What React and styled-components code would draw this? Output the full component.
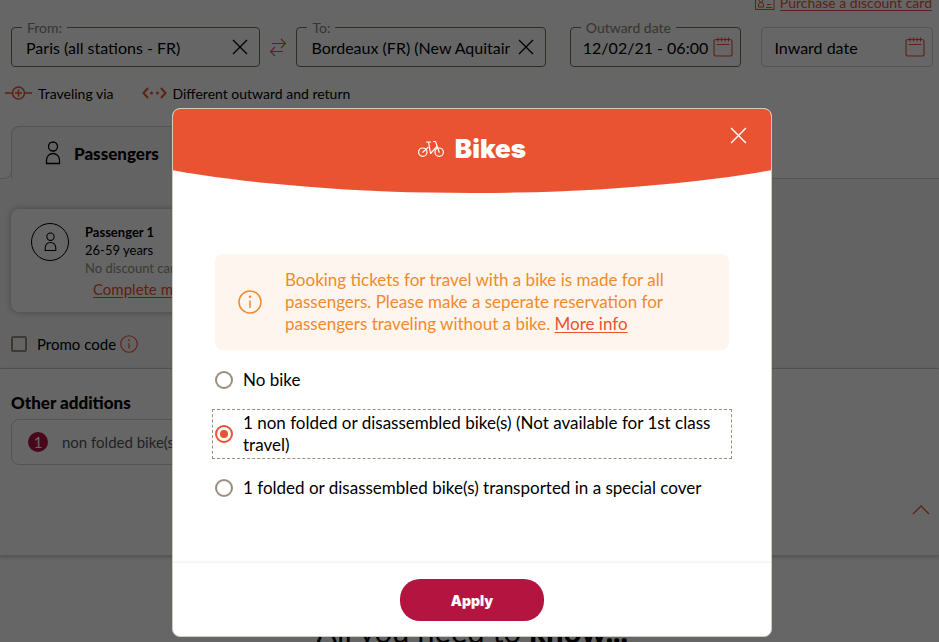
import { useState } from "react";
import styled, { createGlobalStyle } from "styled-components";

const GlobalStyle = createGlobalStyle`
  :root {
    --orange: #ea5331;
    --amber: #f18a2b;
    --crimson: #b41540;
    --taupe: #998f7f;
    --line: #d5d2cc;
  }

  * {
    box-sizing: border-box;
  }

  body {
    margin: 0;
    overflow: hidden;
    background: #fff;
    color: #000;
    font-family: Lato, "Liberation Sans", sans-serif;
    font-size: 16px;
  }

  button, input {
    font-family: inherit;
    color: inherit;
  }
`;

const Page = styled.main`
  height: 100vh;
  overflow: hidden;
`;

const Link = styled.a`
  color: var(--orange);
  font-size: ${({ $size }) => $size || "16px"};
  text-decoration: underline;
  text-underline-offset: 2px;
`;

const DiscountRow = styled.div`
  display: flex;
  justify-content: flex-end;
  align-items: center;
  gap: 5px;
  height: 20px;
  margin-top: -8px;
  padding-right: 7px;
`;

const SearchRow = styled.div`
  display: grid;
  grid-template-columns: minmax(0, 250fr) 36px minmax(0, 250fr) 24px minmax(0, 172fr) 20px minmax(0, 172fr);
  align-items: center;
  margin-top: 15px;
  padding: 0 6px 0 11px;
`;

const FieldBox = styled.div`
  position: relative;
  display: flex;
  align-items: center;
  gap: ${({ $date }) => ($date ? "2px" : "8px")};
  height: 40px;
  padding: 0 ${({ $date }) => ($date ? "7px 0 12px" : "11px 0 14px")};
  border: 1px solid ${({ $empty }) => ($empty ? "var(--line)" : "#77705f")};
  border-radius: 4px;
`;

const FieldLabel = styled.label`
  position: absolute;
  top: -10px;
  left: 10px;
  padding: 0 5px;
  background: #fff;
  color: #8d8475;
  font-size: 14px;
  line-height: 20px;
`;

const FieldInput = styled.input`
  flex: 1;
  min-width: 0;
  padding: 0;
  border: 0;
  outline: 0;
  background: none;
  font-size: 16px;

  &::placeholder {
    color: #000;
    opacity: 1;
  }
`;

const IconButton = styled.button`
  display: flex;
  justify-content: center;
  align-items: center;
  padding: 0;
  border: 0;
  background: none;
  color: ${({ $color }) => $color || "inherit"};
  cursor: pointer;
`;

const Spacer = styled.span``;

const RouteOptions = styled.div`
  display: flex;
  align-items: center;
  gap: 28px;
  height: 20px;
  margin: 16px 0 23px;
  padding-left: 5px;
`;

const RouteButton = styled.button`
  display: flex;
  align-items: center;
  gap: 6px;
  padding: 0;
  border: 0;
  background: none;
  font-size: 14px;

  svg {
    color: var(--orange);
  }
`;

const TabBar = styled.div`
  display: flex;
  align-items: flex-end;
  height: 53px;
`;

const TabLead = styled.div`
  width: 12px;
  height: 45px;
  border-right: 1px solid var(--line);
  border-bottom: 1px solid var(--line);
  border-bottom-right-radius: 8px;
`;

const Tab = styled.button`
  display: flex;
  align-items: center;
  gap: 13px;
  width: 240px;
  height: 53px;
  margin-left: -1px;
  padding: 0 0 0 34px;
  border: 1px solid var(--line);
  border-width: 1px 1px 0 0;
  border-radius: 8px 8px 0 0;
  background: #f8f8f7;
  box-shadow: inset 1px 0 var(--line);
  clip-path: inset(0);
  font-size: 17px;
  font-weight: 900;
  text-align: left;
`;

const TabTrail = styled.div`
  flex: 1;
  border-bottom: 1px solid var(--line);
`;

const PassengerArea = styled.section`
  height: 190px;
  padding: 30px 11px 0;
  background: #f8f8f7;
  border-bottom: 1px solid var(--line);
`;

const PassengerCard = styled.article`
  display: flex;
  gap: 16px;
  width: 270px;
  height: 103px;
  padding: 14px 20px;
  border-radius: 8px;
  background: #fff;
  box-shadow: 0 0 6px rgba(0, 0, 0, 0.3);
`;

const Avatar = styled.span`
  display: flex;
  justify-content: center;
  align-items: center;
  width: 38px;
  height: 38px;
  border: 1px solid #000;
  border-radius: 50%;
`;

const PassengerDetails = styled.div`
  display: flex;
  flex-direction: column;
  font-size: 13px;
  line-height: 18px;

  a {
    margin: 3px 0 0 8px;
  }
`;

const Muted = styled.span`
  color: var(--taupe);
`;

const PromoRow = styled.div`
  display: flex;
  align-items: center;
  height: 20px;
  margin-top: 22px;
  font-size: 15px;

  label {
    margin: 0 4px 0 10px;
  }
`;

const Checkbox = styled.input`
  appearance: none;
  width: 16px;
  height: 16px;
  margin: 0;
  border: 2px solid var(--taupe);
  border-radius: 2px;
`;

const Additions = styled.section`
  height: 187px;
  padding: 22px 11px 0;
  border-bottom: 1px solid #ddd;
  box-shadow: 0 1px 4px rgba(0, 0, 0, 0.25);
`;

const AdditionsTitle = styled.h2`
  margin: 0;
  font-size: 17px;
  line-height: 24px;
  font-weight: 900;
`;

const Addition = styled.div`
  display: flex;
  align-items: center;
  gap: 14px;
  width: 270px;
  height: 46px;
  margin-top: 4px;
  padding-left: 16px;
  border: 1px solid var(--line);
  border-radius: 8px;
  color: #555;
  font-size: 15px;
`;

const CountBadge = styled.span`
  width: 20px;
  border-radius: 50%;
  background: var(--crimson);
  color: #fff;
  line-height: 20px;
  text-align: center;
`;

const CollapseRow = styled.div`
  display: flex;
  justify-content: flex-end;
  margin: 40px -2px 0 0;
`;

const InfoTitle = styled.h2`
  margin: 55px 0 0 5px;
  font-size: 31px;
  line-height: 40px;
  font-weight: 400;
  text-align: center;

  strong {
    font-weight: 900;
  }
`;

const Overlay = styled.div`
  position: fixed;
  inset: 0;
  display: flex;
  justify-content: center;
  align-items: flex-start;
  padding: 108px 0 5px 5px;
  background: rgba(0, 0, 0, 0.6);
`;

const Modal = styled.form`
  width: 600px;
  max-width: 100%;
  border: 1px solid #cfcbc3;
  border-radius: 8px;
  background: #fff;
  overflow: hidden;
`;

const ModalHeader = styled.header`
  display: grid;
  grid-template-columns: 1fr auto 1fr;
  align-items: start;
  height: 84px;
  padding: 18px 24px 0;
  background: var(--orange);
  color: #fff;
  clip-path: ellipse(73% 100% at 50% 0);

  button {
    justify-self: end;
  }
`;

const ModalTitle = styled.h1`
  display: flex;
  align-items: center;
  gap: 11px;
  margin: 4px 0 0;
  font-family: Inter, Lato, sans-serif;
  font-size: 26px;
  line-height: 36px;
  font-weight: 900;
`;

const ModalBody = styled.div`
  display: flex;
  flex-direction: column;
  height: 369px;
  padding: 61px 39px 0;
`;

const Notice = styled.div`
  display: flex;
  align-items: center;
  gap: 23px;
  margin: 0 3px 16px;
  padding: 15px 50px 15px 23px;
  border-radius: 8px;
  background: #fef5ef;
  color: var(--amber);
  line-height: 22px;

  svg {
    flex: none;
  }

  p {
    margin: 0;
    font-size: 17px;
  }
`;

const Option = styled.label`
  display: flex;
  align-items: center;
  gap: 10px;
  margin-bottom: 15px;
  padding: 2px;
  border: 1px dashed ${({ $selected }) => ($selected ? "var(--taupe)" : "transparent")};
  font-size: 17px;
  line-height: 22px;
`;

const Radio = styled.input`
  appearance: none;
  display: grid;
  place-items: center;
  flex: none;
  width: 18px;
  height: 18px;
  margin: 0;
  border: 2px solid var(--taupe);
  border-radius: 50%;

  &:checked {
    border-color: var(--orange);
  }

  &:checked::before {
    content: "";
    width: 8px;
    height: 8px;
    border-radius: 50%;
    background: var(--orange);
  }
`;

const ModalFooter = styled.footer`
  display: flex;
  justify-content: center;
  padding: 16px 0 15px;
  border-top: 1px solid #f2f2f2;
  box-shadow: 0 -1px 2px rgba(0, 0, 0, 0.03);
`;

const ApplyButton = styled.button`
  width: 144px;
  height: 42px;
  border: 0;
  border-radius: 20px;
  background: var(--crimson);
  color: #fff;
  font-family: Inter, Lato, sans-serif;
  font-size: 14px;
  font-weight: 900;
`;

function CloseIcon({ size = 16 }) {
  return (
    <svg width={size} height={size} viewBox="0 0 16 16" fill="none" stroke="currentColor" strokeWidth="1.3">
      <path d="M1 1 15 15M15 1 1 15" />
    </svg>
  );
}

function SwapIcon() {
  return (
    <svg width="18" height="20" viewBox="0 0 18 20" fill="none" stroke="currentColor" strokeWidth="1.1">
      <path d="M3 6.5H16.5M12 2l4.5 4.5L12 11M14 14.5H1.5M6 10l-4.5 4.5L6 19" />
    </svg>
  );
}

function CalendarIcon() {
  return (
    <svg width="20" height="20" viewBox="0 0 20 20" fill="none" stroke="currentColor" strokeWidth="1.1">
      <rect x="1" y="2.5" width="18" height="16.5" rx="2" />
      <path d="M3.5 7.5H16.5M5 .5v4M8.5 .5v4M12 .5v4M15.5 .5v4" />
    </svg>
  );
}

function PersonIcon({ width, height }) {
  return (
    <svg width={width} height={height} viewBox="0 0 16 24" fill="none" stroke="currentColor" strokeWidth="1.3">
      <circle cx="8" cy="5.5" r="4.5" />
      <path d="M1.5 22.5v-3.5a6.5 6.5 0 0 1 13 0v3.5z" />
    </svg>
  );
}

function InfoIcon({ size }) {
  return (
    <svg width={size} height={size} viewBox="0 0 24 24" fill="none" stroke="currentColor" strokeWidth="1.5">
      <circle cx="12" cy="12" r="11" />
      <path d="M12 10.5V18" />
      <circle cx="12" cy="6.7" r="1.2" fill="currentColor" stroke="none" />
    </svg>
  );
}

function ViaIcon() {
  return (
    <svg width="27" height="14" viewBox="0 0 27 14" fill="none" stroke="currentColor" strokeWidth="1.5">
      <circle cx="13.5" cy="7" r="6" />
      <path d="M0 7H7.5M19.5 7H27M10 7h7M13.5 3.5v7" />
    </svg>
  );
}

function OutwardReturnIcon() {
  return (
    <svg width="25" height="12" viewBox="0 0 25 12" fill="none" stroke="currentColor" strokeWidth="2">
      <path d="M6 1 1.5 6 6 11M19 1l4.5 5L19 11" />
      <circle cx="9.5" cy="6" r="1.5" fill="currentColor" stroke="none" />
      <circle cx="15.5" cy="6" r="1.5" fill="currentColor" stroke="none" />
    </svg>
  );
}

function CardIcon() {
  return (
    <svg width="20" height="18" viewBox="0 0 20 18" fill="none" stroke="currentColor">
      <rect x=".5" y="1.5" width="18.5" height="15" />
      <circle cx="6" cy="7.5" r="1.8" />
      <path d="M3.5 14v-2a2.5 2.5 0 0 1 5 0v2zM12 11.5h4M11 14.5h6" />
    </svg>
  );
}

function BikeIcon() {
  return (
    <svg width="26" height="18" viewBox="0 0 26 18" fill="none" stroke="currentColor" strokeWidth="1.2" strokeLinecap="round" strokeLinejoin="round">
      <circle cx="4.8" cy="12.2" r="4.2" />
      <circle cx="21.2" cy="12.2" r="4.2" />
      <path d="M4.8 12.2 10 7.5M8.5 2h4M10.5 2 12.5 13.5 19 6.5M15.5 1.5h2L21.2 12.2" />
    </svg>
  );
}

function ChevronUpIcon() {
  return (
    <svg width="18" height="10" viewBox="0 0 18 10" fill="none" stroke="currentColor" strokeWidth="1.3">
      <path d="M1 9 9 1l8 8" />
    </svg>
  );
}

function Field({ id, label, value, placeholder, date, icon, iconColor, action }) {
  return (
    <FieldBox $empty={!value} $date={date}>
      {label && <FieldLabel htmlFor={id}>{label}</FieldLabel>}
      <FieldInput
        id={id}
        defaultValue={value}
        placeholder={placeholder}
        aria-label={label ? undefined : placeholder}
      />
      <IconButton type="button" aria-label={action} $color={iconColor}>
        {icon}
      </IconButton>
    </FieldBox>
  );
}

const bikeOptions = [
  { id: "none", text: "No bike" },
  {
    id: "non-folded",
    text: "1 non folded or disassembled bike(s) (Not available for 1st class travel)",
  },
  {
    id: "folded",
    text: "1 folded or disassembled bike(s) transported in a special cover",
  },
];

function BikesModal() {
  const [selected, setSelected] = useState("non-folded");

  return (
    <Overlay>
      <Modal role="dialog" aria-labelledby="bikes-title" onSubmit={(e) => e.preventDefault()}>
        <ModalHeader>
          <Spacer />
          <ModalTitle id="bikes-title">
            <BikeIcon />
            Bikes
          </ModalTitle>
          <IconButton type="button" aria-label="Close">
            <CloseIcon size={17} />
          </IconButton>
        </ModalHeader>
        <ModalBody>
          <Notice>
            <InfoIcon size={24} />
            <p>
              Booking tickets for travel with a bike is made for all passengers.
              Please make a seperate reservation for passengers traveling
              without a bike. <Link href="#more" $size="17px">More info</Link>
            </p>
          </Notice>
          {bikeOptions.map(({ id, text }) => (
            <Option key={id} $selected={selected === id}>
              <Radio
                type="radio"
                name="bike"
                checked={selected === id}
                onChange={() => setSelected(id)}
              />
              <span>{text}</span>
            </Option>
          ))}
        </ModalBody>
        <ModalFooter>
          <ApplyButton type="submit">Apply</ApplyButton>
        </ModalFooter>
      </Modal>
    </Overlay>
  );
}

function App() {
  return (
    <>
      <GlobalStyle />
      <Page>
        <DiscountRow>
          <IconButton as="span" $color="var(--orange)">
            <CardIcon />
          </IconButton>
          <Link href="#discount" $size="14px">Purchase a discount card</Link>
        </DiscountRow>

        <SearchRow>
          <Field id="from" label="From:" value="Paris (all stations - FR)" icon={<CloseIcon />} action="Clear origin" />
          <IconButton type="button" aria-label="Swap stations" $color="var(--orange)">
            <SwapIcon />
          </IconButton>
          <Field id="to" label="To:" value="Bordeaux (FR) (New Aquitaine)" icon={<CloseIcon />} action="Clear destination" />
          <Spacer />
          <Field date id="outward" label="Outward date" value="12/02/21 - 06:00" icon={<CalendarIcon />} iconColor="var(--orange)" action="Pick outward date" />
          <Spacer />
          <Field date id="inward" placeholder="Inward date" icon={<CalendarIcon />} iconColor="var(--orange)" action="Pick inward date" />
        </SearchRow>

        <RouteOptions>
          <RouteButton type="button">
            <ViaIcon />
            Traveling via
          </RouteButton>
          <RouteButton type="button">
            <OutwardReturnIcon />
            Different outward and return
          </RouteButton>
        </RouteOptions>

        <TabBar>
          <TabLead />
          <Tab type="button">
            <PersonIcon width={16} height={24} />
            Passengers
            <InfoIcon size={18} />
          </Tab>
          <TabTrail />
        </TabBar>

        <PassengerArea>
          <PassengerCard>
            <Avatar>
              <PersonIcon width={13} height={20} />
            </Avatar>
            <PassengerDetails>
              <strong>Passenger 1</strong>
              <span>26-59 years</span>
              <Muted>No discount cards</Muted>
              <Link href="#profile" $size="15px">Complete my details</Link>
            </PassengerDetails>
          </PassengerCard>
          <PromoRow>
            <Checkbox type="checkbox" id="promo" />
            <label htmlFor="promo">Promo code</label>
            <IconButton type="button" aria-label="About promo codes" $color="var(--orange)">
              <InfoIcon size={18} />
            </IconButton>
          </PromoRow>
        </PassengerArea>

        <Additions>
          <AdditionsTitle>Other additions</AdditionsTitle>
          <Addition>
            <CountBadge>1</CountBadge>
            non folded bike(s)
          </Addition>
          <CollapseRow>
            <IconButton type="button" aria-label="Collapse" $color="var(--orange)">
              <ChevronUpIcon />
            </IconButton>
          </CollapseRow>
        </Additions>

        <InfoTitle>
          All you need to <strong>know...</strong>
        </InfoTitle>
      </Page>
      <BikesModal />
    </>
  );
}

export default App;
